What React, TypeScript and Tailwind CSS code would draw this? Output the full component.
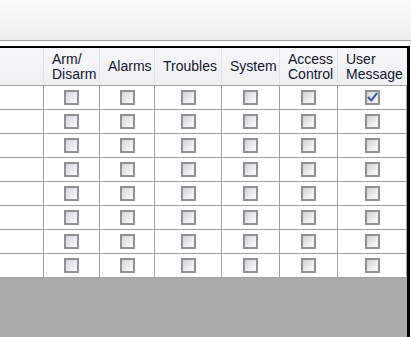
import React from 'react';

const columns = [
  { label: ['Arm/', 'Disarm'], w: 'w-[56px]' },
  { label: ['Alarms'], w: 'w-[55px]' },
  { label: ['Troubles'], w: 'w-[67px]' },
  { label: ['System'], w: 'w-[58px]' },
  { label: ['Access', 'Control'], w: 'w-[58px]' },
  { label: ['User', 'Message'], w: 'w-[69px]' },
];

// row 0 has the user message box ticked
const rows = Array.from({ length: 8 }, (_, r) =>
  columns.map((_, c) => r === 0 && c === 5)
);

function CheckBox({ checked }: { checked: boolean }) {
  return (
    <div className="w-[15px] h-[15px] border-2 border-[#929292] bg-gradient-to-br from-[#cfd3d9] via-[#e6e8eb] to-[#fdfdfd] flex items-center justify-center">
      {checked && (
        <svg width="11" height="11" viewBox="0 0 11 11">
          <path
            d="M1.5 5.5 L4.2 8.6 L9.6 1.6"
            fill="none"
            stroke="#3b57a6"
            strokeWidth="2"
            strokeLinecap="round"
            strokeLinejoin="round"
          />
        </svg>
      )}
    </div>
  );
}

export default function App() {
  return (
    <div
      className="w-[411px] h-[337px] bg-white flex flex-col overflow-hidden"
      style={{ fontFamily: '"Liberation Sans", Arial, sans-serif' }}
    >
      {/* toolbar strip */}
      <div className="h-[41px] shrink-0 bg-gradient-to-b from-[#fbfbfb] to-[#eeeeee] border-b border-[#a3a3a3]" />
      <div className="h-[5px] shrink-0 bg-white" />

      {/* permissions grid */}
      <div className="flex-1 w-[410px] border-t-2 border-r-[3px] border-black bg-[#ababab]">
        <div className="flex h-[38px] bg-gradient-to-b from-[#f6f7f8] to-[#eef0f2] border-b border-[#a3a3a3]">
          <div className="w-[44px] border-r border-[#e2e4e7]" />
          {columns.map((col, i) => (
            <div
              key={i}
              className={`${col.w} border-r border-[#e2e4e7] last:border-r-0 flex flex-col justify-center pl-2 text-[14px] leading-[15px] text-[#14142c]`}
            >
              {col.label.map((t) => (
                <span key={t}>{t}</span>
              ))}
            </div>
          ))}
        </div>
        {rows.map((cells, r) => (
          <div key={r} className="flex h-[24px] bg-white border-b border-[#a3a3a3]">
            <div className="w-[44px] border-r border-[#a3a3a3]" />
            {cells.map((checked, c) => (
              <div
                key={c}
                className={`${columns[c].w} border-r border-[#a3a3a3] flex items-center justify-center`}
              >
                <CheckBox checked={checked} />
              </div>
            ))}
          </div>
        ))}
      </div>
    </div>
  );
}
